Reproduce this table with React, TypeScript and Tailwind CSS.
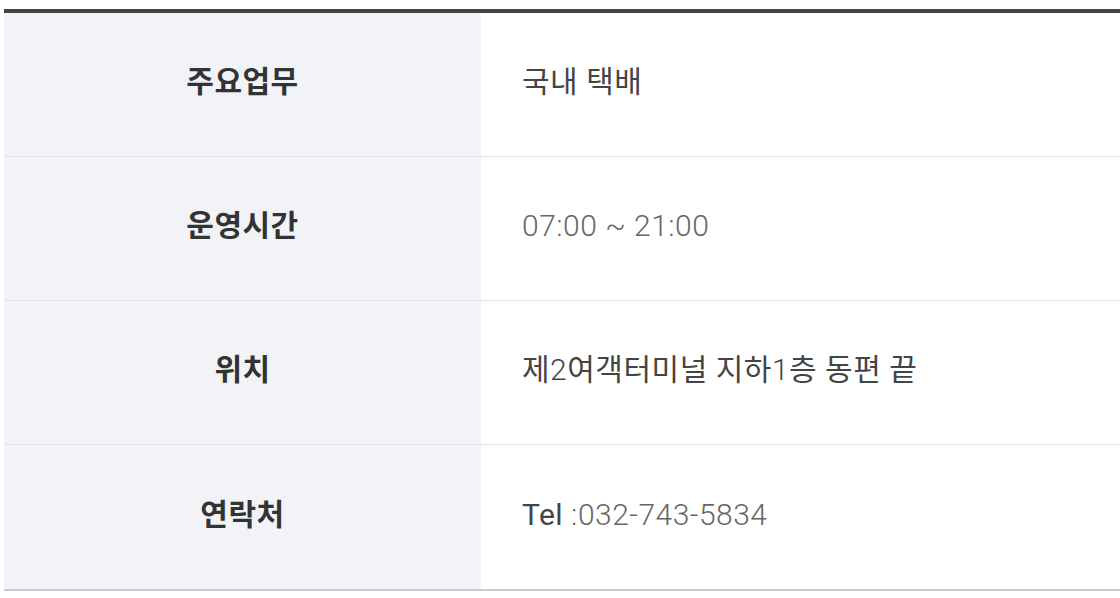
const rows = [
  { label: "주요업무", value: <span className="font-normal text-[#444]">국내 택배</span> },
  { label: "운영시간", value: <span className="font-light text-[#666]">07:00 ~ 21:00</span> },
  {
    label: "위치",
    value: (
      <span className="font-normal text-[#444]">
        제<span className="font-light">2</span>여객터미널 지하<span className="font-light">1</span>층 동편 끝
      </span>
    ),
  },
  {
    label: "연락처",
    value: (
      <span className="text-[#666]">
        <span className="font-normal text-[#444]">Tel </span>
        <span className="font-light">:032-743-5834</span>
      </span>
    ),
  },
];

export default function App() {
  return (
    <div
      className="w-[1120px] h-[598px] overflow-hidden bg-white pl-[4px] pt-[9px]"
      style={{ fontFamily: "Roboto, 'Noto Sans CJK KR', sans-serif" }}
    >
      <div className="w-[1200px] border-t-4 border-[#444] border-b-2 border-b-[#ccc]">
        {rows.map((r, i) => (
          <div
            key={r.label}
            className={
              "flex h-[144px] " + (i < rows.length - 1 ? "border-b border-[#e0e0e0]" : "")
            }
          >
            <div className="w-[477px] shrink-0 bg-[#f2f3f7] flex items-center justify-center pb-[6px]">
              <span className="text-[30px] tracking-[0.5px] font-bold text-[#333]">{r.label}</span>
            </div>
            <div className="flex-1 flex items-center pl-[41px] pb-[6px] text-[30px] tracking-[0.5px]">
              {r.value}
            </div>
          </div>
        ))}
      </div>
    </div>
  );
}
